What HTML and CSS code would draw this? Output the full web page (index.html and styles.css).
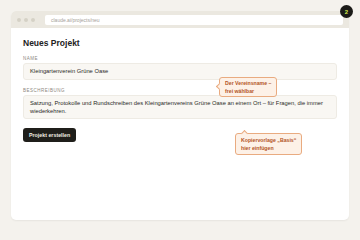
FILE: index.html
```html
<!DOCTYPE html>
<html lang="de">
<head>
  <meta charset="UTF-8">
  <title>Neues Projekt</title>
  <link rel="stylesheet" href="styles.css">
</head>
<body>
  <div class="window">
    <!-- Browser chrome -->
    <div class="chrome">
      <span class="dot"></span>
      <span class="dot"></span>
      <span class="dot"></span>
      <div class="url">claude.ai/projects/neu</div>
    </div>

    <!-- Form -->
    <div class="content">
      <h1>Neues Projekt</h1>

      <div class="field">
        <div class="label">Name</div>
        <div class="input">Kleingartenverein Grüne Oase</div>
      </div>

      <div class="field field-last">
        <div class="label">Beschreibung</div>
        <div class="input textarea">Satzung, Protokolle und Rundschreiben des Kleingartenvereins Grüne Oase an einem Ort – für Fragen, die immer wiederkehren.</div>
      </div>

      <button class="btn">Projekt erstellen</button>
    </div>

    <!-- Hints -->
    <div class="hint hint-left hint-name">Der Vereinsname –<br>frei wählbar</div>
    <div class="hint hint-top hint-desc">Kopiervorlage „Basis“<br>hier einfügen</div>
  </div>

  <div class="badge">2</div>
</body>
</html>
```

FILE: styles.css
```css
/* General */
body {
  margin: 0;
  padding: 11px;
  width: 360px;
  height: 240px;
  box-sizing: border-box;
  background-color: #f4f2ed;
  font-family: 'Liberation Sans', Arial, sans-serif;
  color: #222;
  position: relative;
}

/* Window */
.window {
  position: relative;
  width: 338px;
  height: 209px;
  background-color: #fff;
  border-radius: 5px;
  box-shadow: 0 1px 2px rgba(0, 0, 0, 0.06);
  overflow: hidden;
}

.chrome {
  height: 17px;
  background-color: #ebe8e0;
  display: flex;
  align-items: center;
  gap: 3px;
  padding: 0 6px;
}

.dot {
  width: 4px;
  height: 4px;
  border-radius: 50%;
  background-color: #d5d1c6;
}

.url {
  flex: 1;
  margin-left: 7px;
  height: 10px;
  line-height: 10px;
  background-color: #fff;
  border-radius: 2px;
  padding-left: 6px;
  font-size: 5px;
  color: #a5a199;
}

/* Badge */
.badge {
  position: absolute;
  left: 340px;
  top: 5px;
  width: 13px;
  height: 13px;
  border-radius: 50%;
  background-color: #1b1b18;
  color: #d4ea4c;
  font-size: 6px;
  font-weight: 700;
  display: flex;
  align-items: center;
  justify-content: center;
}

/* Content */
.content {
  padding: 10px 12px;
}

h1 {
  font-size: 8.5px;
  font-weight: 700;
  margin: 0 0 8px;
  line-height: 10px;
}

.field {
  margin-bottom: 8px;
}

.field-last {
  margin-bottom: 9px;
}

.label {
  font-size: 4.5px;
  line-height: 5px;
  text-transform: uppercase;
  letter-spacing: 0.5px;
  color: #8c8880;
  margin-bottom: 2px;
}

.input {
  height: 17px;
  box-sizing: border-box;
  background-color: #f9f7f3;
  border: 1px solid #eeebe4;
  border-radius: 3px;
  padding: 0 6px;
  font-size: 5.8px;
  line-height: 15px;
  color: #2a2a27;
}

.textarea {
  height: 24px;
  padding: 3px 6px;
  line-height: 8px;
}

.btn {
  display: block;
  margin: 0;
  border: none;
  border-radius: 3px;
  background-color: #1f1e1a;
  color: #f1efe2;
  font-family: inherit;
  font-size: 5.3px;
  font-weight: 700;
  padding: 4px 6px;
  line-height: 6px;
}

/* Hints */
.hint {
  position: absolute;
  background-color: #fdf1e7;
  border: 1px solid #e9ab80;
  border-radius: 3px;
  color: #b3541f;
  font-size: 5.2px;
  font-weight: 700;
  line-height: 8px;
  padding: 1px 5px;
}

.hint::before {
  content: "";
  position: absolute;
  width: 4px;
  height: 4px;
  background-color: #fdf1e7;
  border-left: 1px solid #e9ab80;
  border-top: 1px solid #e9ab80;
}

.hint-left::before {
  left: -3px;
  top: 6px;
  transform: rotate(-45deg);
}

.hint-top::before {
  left: 6px;
  top: -3px;
  transform: rotate(45deg);
}

.hint-name {
  left: 208px;
  top: 66px;
}

.hint-desc {
  left: 224px;
  top: 122px;
  padding: 2px 5px;
}
```
